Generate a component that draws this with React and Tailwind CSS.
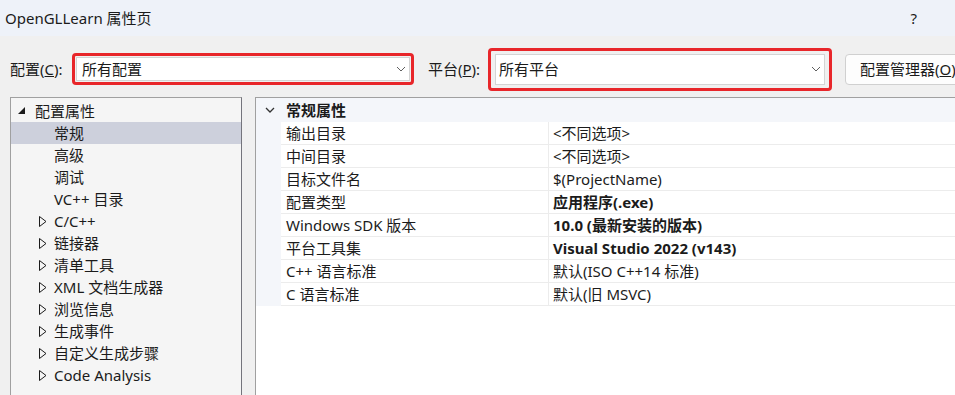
import React from "react";

const font = {
  fontFamily: '"Segoe UI", "Noto Sans", "Noto Sans CJK SC", sans-serif',
};

const treeItems = [
  { label: "配置属性", level: 0, open: true },
  { label: "常规", level: 1, selected: true },
  { label: "高级", level: 1 },
  { label: "调试", level: 1 },
  { label: "VC++ 目录", level: 1 },
  { label: "C/C++", level: 1, closed: true },
  { label: "链接器", level: 1, closed: true },
  { label: "清单工具", level: 1, closed: true },
  { label: "XML 文档生成器", level: 1, closed: true },
  { label: "浏览信息", level: 1, closed: true },
  { label: "生成事件", level: 1, closed: true },
  { label: "自定义生成步骤", level: 1, closed: true },
  { label: "Code Analysis", level: 1, closed: true },
];

const props = [
  { name: "输出目录", value: "<不同选项>" },
  { name: "中间目录", value: "<不同选项>" },
  { name: "目标文件名", value: "$(ProjectName)" },
  { name: "配置类型", value: "应用程序(.exe)", bold: true },
  { name: "Windows SDK 版本", value: "10.0 (最新安装的版本)", bold: true },
  { name: "平台工具集", value: "Visual Studio 2022 (v143)", bold: true },
  { name: "C++ 语言标准", value: "默认(ISO C++14 标准)" },
  { name: "C 语言标准", value: "默认(旧 MSVC)" },
];

function ComboChevron() {
  return (
    <svg width="10" height="6" viewBox="0 0 10 6" className="shrink-0">
      <polyline points="1,1 5,5 9,1" fill="none" stroke="#606060" strokeWidth="1" />
    </svg>
  );
}

function TreeRow({ item }) {
  return (
    <div
      className={`flex items-center h-[22px] ${item.selected ? "bg-[#cdd0dc]" : ""}`}
    >
      {item.level === 0 ? (
        <div className="w-[24px] pl-[7px] flex items-center">
          <svg width="8" height="8" viewBox="0 0 8 8">
            <polygon points="7,0 7,7 0,7" fill="#1b1b1b" />
          </svg>
        </div>
      ) : (
        <div className="w-[43px] pl-[28px] flex items-center">
          {item.closed && (
            <svg width="8" height="11" viewBox="0 0 8 11">
              <polygon points="0.5,0.5 7,5.5 0.5,10.5" fill="none" stroke="#1b1b1b" strokeWidth="1" />
            </svg>
          )}
        </div>
      )}
      <span className="text-[15px] text-[#1b1b1b] whitespace-nowrap">{item.label}</span>
    </div>
  );
}

export default function App() {
  return (
    <div className="w-[955px] h-[395px] overflow-hidden flex flex-col bg-[#f0f0f0] text-[#1b1b1b]" style={font}>
      {/* title bar */}
      <div className="h-[36px] shrink-0 bg-[#eef2f9] flex items-center pl-[5px]">
        <span className="text-[15px]">OpenGLLearn 属性页</span>
        <span className="ml-auto mr-[38px] text-[15px]">?</span>
      </div>

      {/* config row */}
      <div className="h-[61px] shrink-0 flex items-center pl-[10px] pt-[5px]">
        <span className="w-[52px] shrink-0 text-[15px] whitespace-nowrap">
          配置(<span className="underline">C</span>):
        </span>
        <div className="ml-[10px] w-[342px] h-[32px] shrink-0 border-[3px] border-[#e8262a] rounded-[4px] p-[1px]">
          <div className="h-full bg-white border border-[#d4d4d4] flex items-center pl-[5px] pr-[3px]">
            <span className="text-[15px] flex-1">所有配置</span>
            <ComboChevron />
          </div>
        </div>
        <span className="ml-[14px] w-[50px] shrink-0 text-[15px] whitespace-nowrap">
          平台(<span className="underline">P</span>):
        </span>
        <div className="ml-[10px] w-[344px] h-[43px] shrink-0 border-[3px] border-[#e8262a] rounded-[4px] px-[4px] py-[3px]">
          <div className="h-full bg-white border border-[#d4d4d4] flex items-center pl-[3px] pr-[3px]">
            <span className="text-[15px] flex-1">所有平台</span>
            <ComboChevron />
          </div>
        </div>
        <div className="ml-[13px] w-[130px] h-[31px] shrink-0 bg-[#fdfdfd] border border-[#d0d0d0] rounded-[4px] flex items-center pl-[14px]">
          <span className="text-[15px] whitespace-nowrap">
            配置管理器(<span className="underline">O</span>)
          </span>
        </div>
      </div>

      {/* panels */}
      <div className="flex-1 flex pl-[10px] min-h-0">
        <div className="w-[232px] shrink-0 bg-[#f5f5f5] border border-[#a0a0a0] border-r-[#74747c] border-b-0 pt-[2px]">
          {treeItems.map((item) => (
            <TreeRow key={item.label} item={item} />
          ))}
        </div>

        <div className="ml-[13px] w-[720px] shrink-0 bg-white border-l border-t border-[#a0a0a0]">
          <div className="h-[24px] bg-[#f4f6fa] flex items-center">
            <div className="w-[25px] flex justify-center pl-[2px]">
              <svg width="10" height="6" viewBox="0 0 10 6">
                <polyline points="1,1 5,5 9,1" fill="none" stroke="#333" strokeWidth="1.3" />
              </svg>
            </div>
            <span className="text-[15px] font-bold pl-[5px]">常规属性</span>
          </div>
          {props.map((p) => (
            <div key={p.name} className="h-[23px] flex">
              <div className="w-[25px] bg-[#f4f6fa]" />
              <div className="w-[268px] border-b border-r border-[#ececec] flex items-center pl-[5px]">
                <span className="text-[15px] whitespace-nowrap">{p.name}</span>
              </div>
              <div className="flex-1 border-b border-[#ececec] flex items-center pl-[4px]">
                <span className={`text-[15px] whitespace-nowrap ${p.bold ? "font-bold" : ""}`}>{p.value}</span>
              </div>
            </div>
          ))}
        </div>
      </div>
    </div>
  );
}
